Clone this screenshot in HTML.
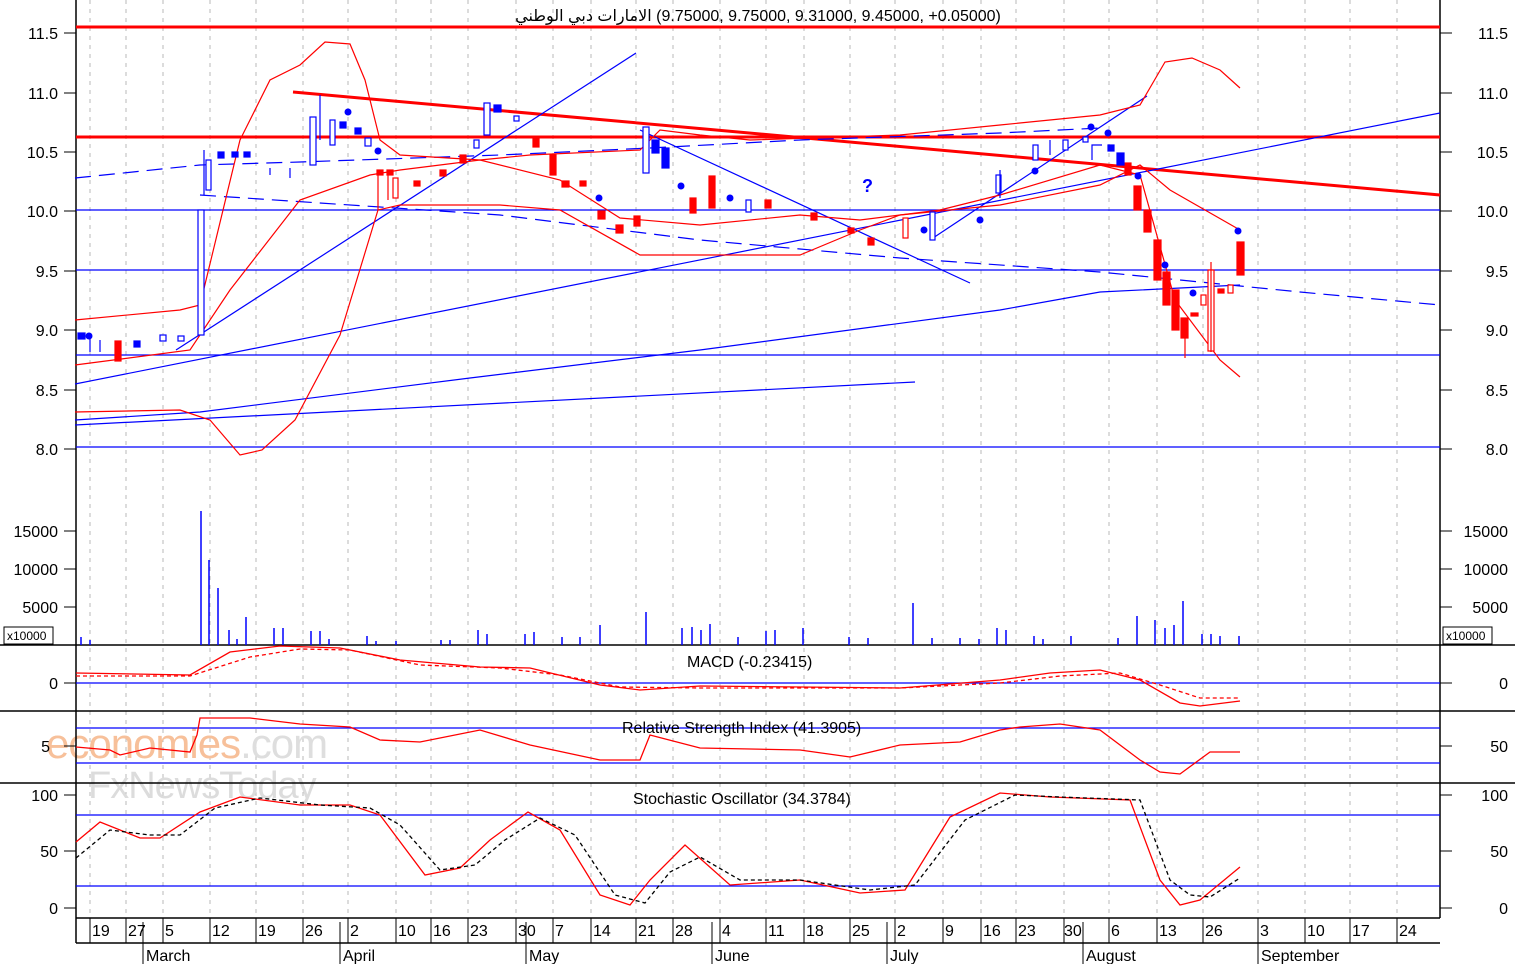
<!DOCTYPE html>
<html><head><meta charset="utf-8"><style>
html,body{margin:0;padding:0;background:#fff;width:1515px;height:964px;overflow:hidden}
svg{display:block}
text{font-family:"Liberation Sans",Arial,sans-serif;font-size:16px;fill:#000}
</style></head><body>
<svg width="1515" height="964" viewBox="0 0 1515 964" xmlns="http://www.w3.org/2000/svg">
<g stroke="#b8b8b8" stroke-width="1" stroke-dasharray="4,5">
<path d="M90 0V918M126 0V918M163 0V918M210 0V918M256 0V918M303 0V918M348 0V918M396 0V918M431 0V918M468 0V918M516 0V918M553 0V918M591 0V918M636 0V918M673 0V918M720 0V918M766 0V918M804 0V918M850 0V918M895 0V918M943 0V918M981 0V918M1016 0V918M1064 0V918M1109 0V918M1157 0V918M1203 0V918M1258 0V918M1305 0V918M1350 0V918M1397 0V918"/>
</g>
<text x="46" y="758" style="font-size:42px;fill:#f7c09a;letter-spacing:-1px">economies<tspan style="fill:#dedede">.com</tspan></text>
<text x="88" y="798" style="font-size:38px;fill:#dcdcdc;letter-spacing:-1px">FxNewsToday</text>
<g stroke="#000" stroke-width="1.5" fill="none">
<path d="M76 0V943M1440 0V918"/>
<path d="M0 645H1515M0 711H1515M0 783H1515"/>
<path d="M76 918H1440M76 943H1440"/>
</g>
<g stroke="#000" stroke-width="1">
<path d="M64 33H76M64 93H76M64 152H76M64 211H76M64 271H76M64 330H76M64 390H76M64 449H76M1440 33H1452M1440 93H1452M1440 152H1452M1440 211H1452M1440 271H1452M1440 330H1452M1440 390H1452M1440 449H1452"/>
<path d="M64 531H76M64 569H76M64 607H76M1440 531H1452M1440 569H1452M1440 607H1452M64 683H76M1440 683H1452M64 746H76M1440 746H1452M64 795H76M64 851H76M64 908H76M1440 795H1452M1440 851H1452M1440 908H1452"/>
<path d="M90 918V943M126 918V943M163 918V943M210 918V943M256 918V943M303 918V943M348 918V943M396 918V943M431 918V943M468 918V943M516 918V943M553 918V943M591 918V943M636 918V943M673 918V943M720 918V943M766 918V943M804 918V943M850 918V943M895 918V943M943 918V943M981 918V943M1016 918V943M1064 918V943M1109 918V943M1157 918V943M1203 918V943M1258 918V943M1305 918V943M1350 918V943M1397 918V943"/>
<path d="M143 922V964M340 922V964M526 922V964M712 922V964M887 922V964M1083 922V964M1258 922V964"/>
</g>
<g text-anchor="end" style="font-size:16.5px">
<text x="58" y="39">11.5</text><text x="58" y="99">11.0</text><text x="58" y="158">10.5</text><text x="58" y="217">10.0</text><text x="58" y="277">9.5</text><text x="58" y="336">9.0</text><text x="58" y="396">8.5</text><text x="58" y="455">8.0</text>
<text x="58" y="537">15000</text><text x="58" y="575">10000</text><text x="58" y="613">5000</text>
<text x="58" y="689">0</text><text x="50" y="752">5</text>
<text x="58" y="801">100</text><text x="58" y="857">50</text><text x="58" y="914">0</text>
<text x="1508" y="39">11.5</text><text x="1508" y="99">11.0</text><text x="1508" y="158">10.5</text><text x="1508" y="217">10.0</text><text x="1508" y="277">9.5</text><text x="1508" y="336">9.0</text><text x="1508" y="396">8.5</text><text x="1508" y="455">8.0</text>
<text x="1508" y="537">15000</text><text x="1508" y="575">10000</text><text x="1508" y="613">5000</text>
<text x="1508" y="689">0</text><text x="1508" y="752">50</text>
<text x="1508" y="801">100</text><text x="1508" y="857">50</text><text x="1508" y="914">0</text>
</g>
<rect x="4" y="627" width="49" height="17" fill="#fff" stroke="#000"/>
<text x="7" y="640" style="font-size:12px">x10000</text>
<rect x="1443" y="627" width="49" height="17" fill="#fff" stroke="#000"/>
<text x="1446" y="640" style="font-size:12px">x10000</text>
<g style="font-size:17px">
<text x="92" y="936">19</text><text x="128" y="936">27</text><text x="165" y="936">5</text><text x="212" y="936">12</text><text x="258" y="936">19</text><text x="305" y="936">26</text><text x="350" y="936">2</text><text x="398" y="936">10</text><text x="433" y="936">16</text><text x="470" y="936">23</text><text x="518" y="936">30</text><text x="555" y="936">7</text><text x="593" y="936">14</text><text x="638" y="936">21</text><text x="675" y="936">28</text><text x="722" y="936">4</text><text x="768" y="936">11</text><text x="806" y="936">18</text><text x="852" y="936">25</text><text x="897" y="936">2</text><text x="945" y="936">9</text><text x="983" y="936">16</text><text x="1018" y="936">23</text><text x="1064" y="936">30</text><text x="1111" y="936">6</text><text x="1159" y="936">13</text><text x="1205" y="936">26</text><text x="1260" y="936">3</text><text x="1307" y="936">10</text><text x="1352" y="936">17</text><text x="1399" y="936">24</text>
<text x="146" y="961">March</text><text x="343" y="961">April</text><text x="529" y="961">May</text><text x="715" y="961">June</text><text x="890" y="961">July</text><text x="1086" y="961">August</text><text x="1261" y="961">September</text>
</g>
<text x="758" y="21" text-anchor="middle" style="font-size:16px;font-family:'Liberation Sans','DejaVu Sans',sans-serif"><tspan>&#x2066;الامارات دبي الوطني&#x2069; (9.75000, 9.75000, 9.31000, 9.45000, +0.05000)</tspan></text>
<g fill="none">
<path d="M76 27H1440M76 137H1440" stroke="#f00" stroke-width="3"/>
<path d="M76 210H1440M76 270H1440M76 355H1440M76 447H1440" stroke="#00f" stroke-width="1.3"/>
<path d="M293 92L1440 195" stroke="#f00" stroke-width="3"/>
<g stroke="#00f" stroke-width="1.2">
<path d="M176 350L636 53"/>
<path d="M75 384L1440 113"/>
<path d="M75 425L915 382"/>
<path d="M640 130L970 283"/>
<path d="M930 240L1147 96"/>
<path d="M75 420L200 412L470 378L700 350L1000 310L1100 292L1240 285"/>
<path stroke-dasharray="16,8" d="M75 178L200 165L300 162L500 155L650 148L800 140L1000 133L1100 128"/>
<path stroke-dasharray="16,8" d="M200 195L500 215L700 240L900 258L1100 272L1300 292L1440 305"/>
</g>
<g stroke="#f00" stroke-width="1.2">
<path d="M75 320L180 310L200 305L240 140L270 80L300 65L325 42L350 44L365 80L380 140L400 155L480 160L530 155L640 150L660 130L700 135L750 140L900 135L1000 125L1100 115L1140 105L1165 62L1192 58L1220 70L1240 88"/>
<path d="M75 412L180 410L210 420L240 455L262 450L295 420L340 335L378 210L400 205L500 205L560 210L640 255L800 255L860 230L900 215L1000 205L1100 185L1140 165L1170 190L1240 230"/>
<path d="M75 365L190 350L230 290L300 200L370 175L400 170L480 160L560 180L620 218L700 225L800 215L860 220L940 210L1000 195L1100 165L1140 175L1175 300L1220 360L1240 377"/>
</g>
</g>
<g stroke="#f00" stroke-width="1.2" fill="none">
<rect x="115" y="341" width="6" height="20" fill="#f00"/>
<rect x="377" y="170" width="6" height="5" fill="#f00"/><rect x="387" y="170" width="6" height="5" fill="#f00"/>
<rect x="414" y="181" width="6" height="5" fill="#f00"/>
<rect x="440" y="170" width="6" height="6" fill="#f00"/><rect x="460" y="155" width="6" height="8" fill="#f00"/>
<rect x="533" y="137" width="6" height="10" fill="#f00"/><rect x="550" y="155" width="6" height="20" fill="#f00"/>
<rect x="562" y="181" width="7" height="6" fill="#f00"/><rect x="580" y="181" width="6" height="5" fill="#f00"/>
<rect x="598" y="211" width="7" height="8" fill="#f00"/><rect x="616" y="225" width="7" height="8" fill="#f00"/><rect x="634" y="216" width="6" height="10" fill="#f00"/>
<rect x="690" y="198" width="6" height="15" fill="#f00"/><rect x="709" y="176" width="6" height="32" fill="#f00"/><rect x="765" y="200" width="6" height="8" fill="#f00"/>
<rect x="811" y="213" width="6" height="7" fill="#f00"/><rect x="848" y="228" width="6" height="5" fill="#f00"/><rect x="868" y="238" width="6" height="7" fill="#f00"/>
<rect x="1125" y="163" width="6" height="12" fill="#f00"/>
<rect x="1134" y="186" width="7" height="24" fill="#f00"/><rect x="1144" y="210" width="7" height="22" fill="#f00"/><rect x="1154" y="240" width="7" height="40" fill="#f00"/><rect x="1163" y="272" width="7" height="33" fill="#f00"/><rect x="1172" y="290" width="7" height="40" fill="#f00"/><rect x="1181" y="318" width="7" height="20" fill="#f00"/>
<rect x="1191" y="313" width="7" height="3" fill="#f00"/><rect x="1218" y="289" width="6" height="4" fill="#f00"/><rect x="1237" y="242" width="7" height="33" fill="#f00"/>
<rect x="393" y="178" width="5" height="20" fill="#fff"/><rect x="903" y="218" width="5" height="20" fill="#fff"/><rect x="1201" y="295" width="5" height="10" fill="#fff"/><rect x="1208" y="270" width="6" height="81" fill="#fff"/><rect x="1228" y="285" width="5" height="8" fill="#fff"/>
<path d="M1185 335V358M1211 262V352M378 170V210M388 170V200"/>
</g>
<g stroke="#00f" stroke-width="1.2" fill="none">
<rect x="198" y="210" width="6" height="125" fill="#fff"/><rect x="206" y="160" width="5" height="30" fill="#fff"/>
<rect x="310" y="117" width="6" height="48" fill="#fff"/><rect x="330" y="120" width="5" height="25" fill="#fff"/><rect x="365" y="138" width="6" height="8" fill="#fff"/>
<rect x="484" y="103" width="6" height="32" fill="#fff"/><rect x="474" y="140" width="5" height="8" fill="#fff"/><rect x="514" y="116" width="5" height="5" fill="#fff"/>
<rect x="643" y="127" width="6" height="46" fill="#fff"/><rect x="746" y="200" width="5" height="12" fill="#fff"/><rect x="930" y="212" width="5" height="28" fill="#fff"/>
<rect x="996" y="175" width="5" height="18" fill="#fff"/><rect x="1033" y="145" width="5" height="15" fill="#fff"/><rect x="1063" y="140" width="5" height="10" fill="#fff"/><rect x="1083" y="137" width="5" height="5" fill="#fff"/>
<rect x="160" y="335" width="6" height="6" fill="#fff"/><rect x="178" y="336" width="6" height="5" fill="#fff"/>
<rect x="78" y="333" width="7" height="6" fill="#00f"/><rect x="134" y="341" width="6" height="6" fill="#00f"/>
<rect x="218" y="152" width="6" height="6" fill="#00f"/><rect x="232" y="152" width="6" height="5" fill="#00f"/><rect x="244" y="152" width="6" height="5" fill="#00f"/>
<rect x="340" y="122" width="6" height="6" fill="#00f"/><rect x="355" y="128" width="6" height="6" fill="#00f"/><rect x="494" y="105" width="7" height="7" fill="#00f"/>
<rect x="652" y="140" width="7" height="13" fill="#00f"/><rect x="662" y="148" width="7" height="20" fill="#00f"/>
<rect x="1108" y="145" width="6" height="6" fill="#00f"/><rect x="1117" y="153" width="7" height="12" fill="#00f"/>
<path d="M90 334V352M100 340V352M270 168V175M290 168V178M320 95V140M204 150V195M1000 170V198M1050 140V155M1102 145H1092V160"/>
</g>
<g fill="#00f">
<circle cx="89" cy="336" r="3.5"/><circle cx="348" cy="112" r="3.5"/><circle cx="378" cy="151" r="3.5"/><circle cx="599" cy="198" r="3.5"/><circle cx="681" cy="186" r="3.5"/><circle cx="730" cy="198" r="3.5"/><circle cx="924" cy="230" r="3.5"/><circle cx="980" cy="220" r="3.5"/><circle cx="1035" cy="171" r="3.5"/><circle cx="1091" cy="127" r="3.5"/><circle cx="1108" cy="133" r="3.5"/><circle cx="1138" cy="176" r="3.5"/><circle cx="1165" cy="265" r="3.5"/><circle cx="1193" cy="293" r="3.5"/><circle cx="1238" cy="231" r="3.5"/>
</g>
<text x="862" y="192" style="font-size:18px;font-weight:bold;fill:#00f">?</text>
<g stroke="#00f" stroke-width="1.5">
<path d="M81 637V645M90 640V645M201 511V645M209 560V645M218 588V645M229 630V645M237 639V645M246 617V645M274 628V645M283 628V645M311 631V645M320 631V645M329 639V645M367 636V645M376 641V645M396 641V645M441 640V645M450 640V645M478 630V645M487 634V645M525 634V645M534 632V645M562 637V645M580 637V645M600 625V645M646 612V645M682 628V645M692 627V645M701 630V645M710 624V645M738 637V645M766 631V645M775 630V645M803 628V645M849 637V645M868 638V645M913 603V645M932 638V645M960 638V645M979 639V645M997 628V645M1006 630V645M1034 636V645M1043 639V645M1071 636V645M1118 638V645M1137 616V645M1155 620V645M1165 628V645M1174 625V645M1183 601V645M1202 634V645M1211 634V645M1220 636V645M1239 636V645"/>
</g>
<text x="687" y="667" style="font-size:16px">MACD (-0.23415)</text>
<path d="M76 683H1440M76 728H1440M76 763H1440M76 815H1440M76 886H1440" stroke="#00f" stroke-width="1.3"/>
<g fill="none" stroke-width="1.3">
<path stroke="#f00" d="M76 673L190 675L230 652L280 646L340 648L400 660L480 667L530 668L600 685L640 690L700 686L900 688L1000 680L1050 673L1100 670L1140 680L1180 703L1200 706L1240 701"/>
<path stroke="#f00" stroke-dasharray="4,3" d="M76 676L190 676L250 657L300 649L350 650L420 665L500 668L560 675L620 687L700 688L900 688L1000 683L1060 676L1120 673L1160 685L1200 698L1240 698"/>
</g>
<text x="622" y="733" style="font-size:16px">Relative Strength Index (41.3905)</text>
<path fill="none" stroke="#f00" stroke-width="1.3" d="M76 747L110 750L120 755L150 748L190 752L197 735L200 718L250 718L300 724L350 727L380 740L420 742L480 730L530 745L600 760L640 760L650 735L700 748L800 750L850 757L900 745L960 742L1000 730L1020 727L1060 724L1100 730L1140 760L1160 772L1180 774L1210 752L1240 752"/>
<text x="633" y="804" style="font-size:16px">Stochastic Oscillator (34.3784)</text>
<g fill="none" stroke-width="1.3">
<path stroke="#f00" d="M76 842L100 822L140 838L160 838L200 812L240 797L300 805L350 805L380 815L425 875L460 868L490 840L528 812L560 830L600 895L630 905L650 880L685 845L730 885L800 880L860 893L905 890L950 817L1000 793L1050 797L1130 800L1160 880L1180 905L1200 900L1240 867"/>
<path stroke="#000" stroke-dasharray="4,3" d="M76 858L110 830L150 835L180 835L215 808L260 798L320 805L370 808L400 825L440 870L475 865L505 840L540 818L575 835L615 895L645 903L670 872L700 857L740 880L800 880L870 890L915 885L965 820L1015 795L1060 797L1140 800L1170 880L1190 895L1210 897L1240 878"/>
</g>
</svg>
</body></html>
